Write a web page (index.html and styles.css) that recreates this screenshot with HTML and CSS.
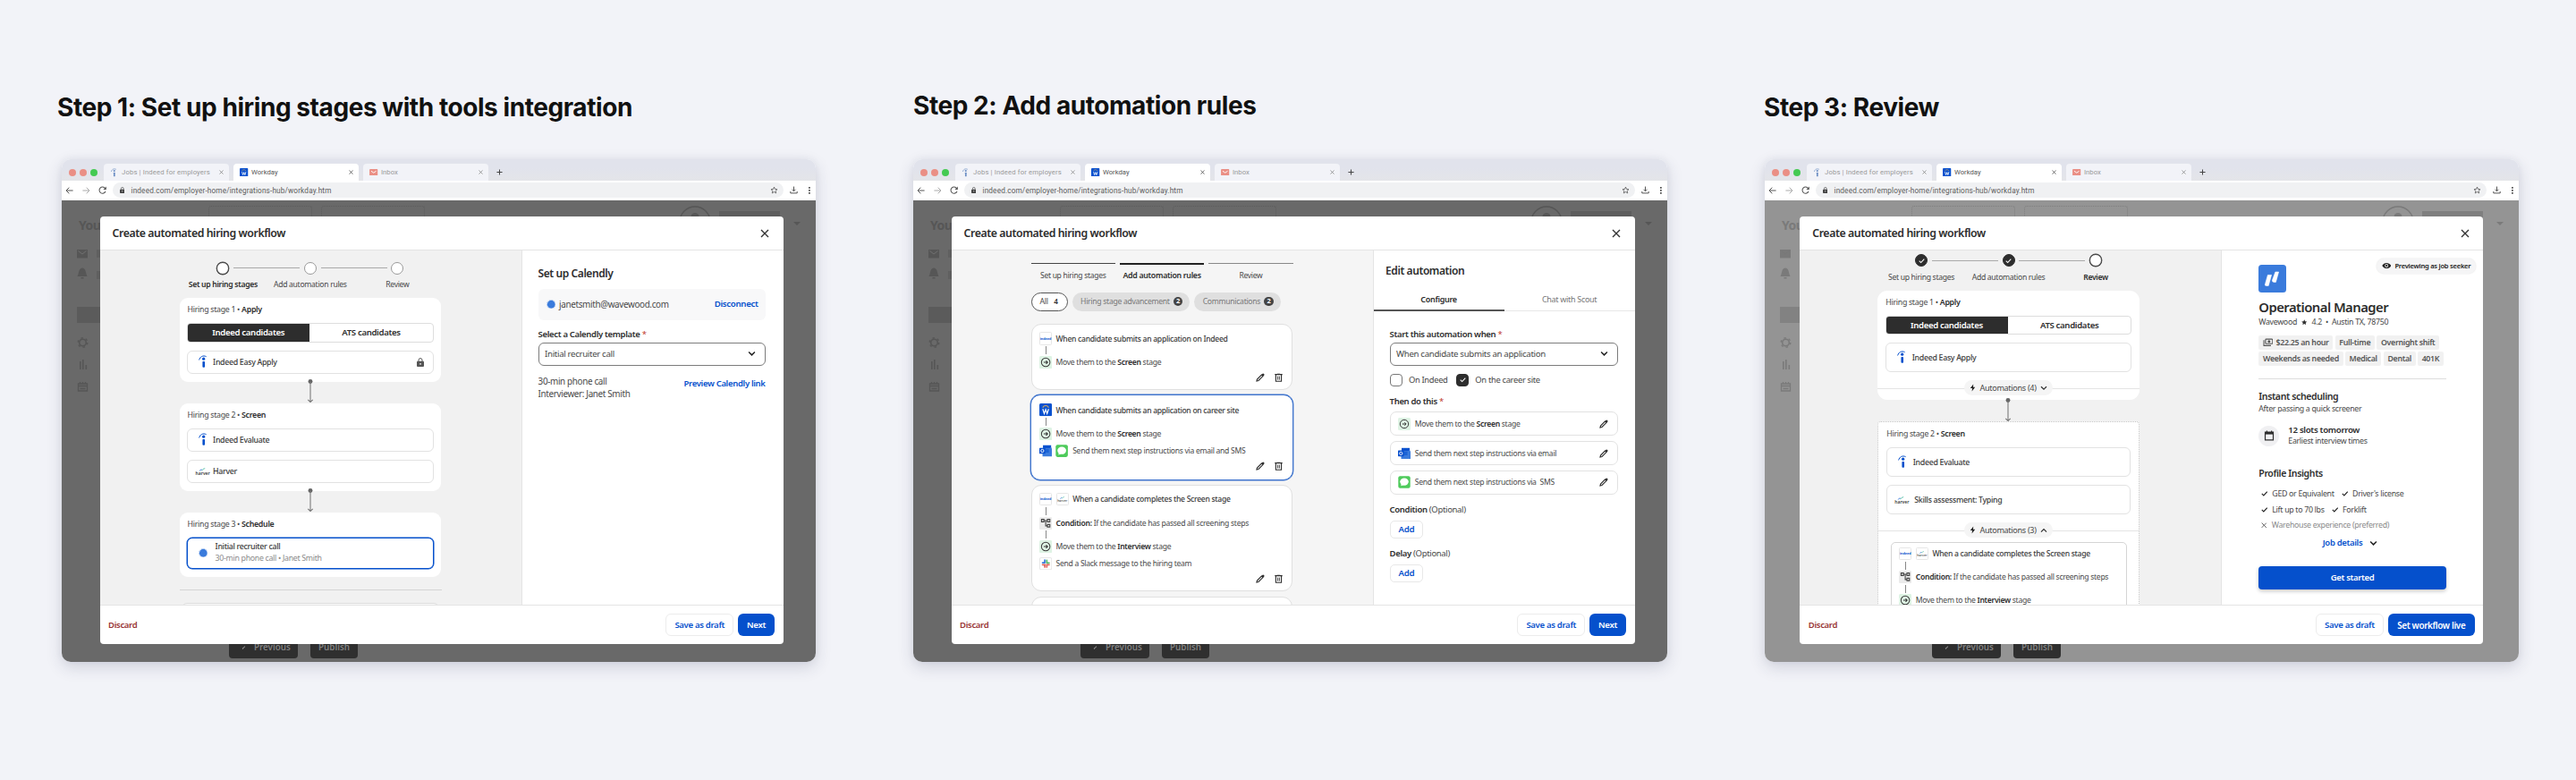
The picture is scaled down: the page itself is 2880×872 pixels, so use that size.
FILE: index.html
```html
<!DOCTYPE html>
<html lang="en">
<head>
  <meta charset="UTF-8" />
  <meta name="viewport" content="width=device-width, initial-scale=1.0"/>
  <title>Automated hiring workflow</title>
  <link rel="stylesheet" href="styles.css">
</head>
<body>
  <!-- Icon sprite -->
  <svg class="sprite" aria-hidden="true">
    <symbol id="i-indeed" viewBox="0 0 10 16">
      <path d="M.8 5.6C1.8 1.8 5.6-.2 9.2 1.6" fill="none" stroke="currentColor" stroke-width="1.1" stroke-linecap="round"/>
      <circle cx="6.3" cy="4.6" r="1.8" fill="currentColor"/>
      <rect x="4.9" y="7.6" width="2.9" height="7.6" rx="1" fill="currentColor"/>
    </symbol>
    <symbol id="i-workday" viewBox="0 0 14 14">
      <rect width="14" height="14" rx="1.5" fill="#0a52cf"/>
      <path d="M3.8 4.8C4.6 1.8 9.4 1.8 10.2 4.8" fill="none" stroke="#c9a36a" stroke-width="1"/>
      <path d="M3.8 6.2l1.6 5L7 6.8l1.6 4.4 1.6-5" fill="none" stroke="#fff" stroke-width="1.2"/>
    </symbol>
    <symbol id="i-mail-red" viewBox="0 0 10 8">
      <rect width="10" height="8" rx="1" fill="#ea8f85"/>
      <path d="M2 2.4l3 2 3-2" fill="none" stroke="#fff" stroke-width="1"/>
    </symbol>
    <symbol id="i-x" viewBox="0 0 10 10"><path d="M1 1l8 8M9 1l-8 8" fill="none" stroke="currentColor" stroke-width="1.4"/></symbol>
    <symbol id="i-plus" viewBox="0 0 8 8"><path d="M4 .5v7M.5 4h7" stroke="currentColor" stroke-width="1.2"/></symbol>
    <symbol id="i-back" viewBox="0 0 9 8"><path d="M8.6 4H1M4.3.7L1 4l3.3 3.3" fill="none" stroke="currentColor" stroke-width="1"/></symbol>
    <symbol id="i-forward" viewBox="0 0 9 8"><path d="M.4 4H8M4.7.7L8 4 4.7 7.3" fill="none" stroke="currentColor" stroke-width="1"/></symbol>
    <symbol id="i-reload" viewBox="0 0 10 10">
      <path d="M8.4 6.3A3.8 3.8 0 1 1 8 2.7" fill="none" stroke="currentColor" stroke-width="1.1"/>
      <path d="M9.3.6v3.6H5.7z" fill="currentColor"/>
    </symbol>
    <symbol id="i-lock" viewBox="0 0 8 10">
      <rect y="3.8" width="8" height="6.2" rx="1" fill="currentColor"/>
      <path d="M2 4V2.6a2 2 0 0 1 4 0V4" fill="none" stroke="currentColor" stroke-width="1"/>
      <circle cx="4" cy="6.9" r=".8" fill="#fff"/>
    </symbol>
    <symbol id="i-star-line" viewBox="0 0 10 10"><path d="M5 1.2l1.1 2.6 2.8.3-2.1 1.9.6 2.8L5 7.3 2.6 8.8l.6-2.8L1.1 4.1l2.8-.3z" fill="none" stroke="currentColor" stroke-width=".9"/></symbol>
    <symbol id="i-star" viewBox="0 0 10 10"><path d="M5 .4l1.4 3 3.3.4-2.4 2.3.6 3.3L5 7.8 2.1 9.4l.6-3.3L.3 3.8l3.3-.4z" fill="currentColor"/></symbol>
    <symbol id="i-download" viewBox="0 0 10 10"><path d="M5 .6v5.6M2.8 4.2L5 6.4l2.2-2.2M.9 6.6v2.2h8.2V6.6" fill="none" stroke="currentColor" stroke-width="1.1"/></symbol>
    <symbol id="i-dots" viewBox="0 0 2 8"><path d="M0 0h1.8v1.8H0zM0 3h1.8v1.8H0zM0 6h1.8v1.8H0z" fill="currentColor"/></symbol>
    <symbol id="i-down" viewBox="0 0 8 6"><path d="M1 1.2l3 3 3-3" fill="none" stroke="currentColor" stroke-width="1.3"/></symbol>
    <symbol id="i-up" viewBox="0 0 8 6"><path d="M1 4.6l3-3 3 3" fill="none" stroke="currentColor" stroke-width="1.3"/></symbol>
    <symbol id="i-move" viewBox="0 0 14 14">
      <rect width="14" height="14" rx="1.5" fill="#def3e4"/>
      <circle cx="7" cy="7" r="4.7" fill="none" stroke="#3a3a3a" stroke-width="1"/>
      <path d="M4.8 7H9M7.4 5.3L9.1 7 7.4 8.7" fill="none" stroke="#333" stroke-width="1"/>
    </symbol>
    <symbol id="i-tree" viewBox="0 0 14 14">
      <rect width="14" height="14" rx="1.5" fill="#ebebeb"/>
      <path d="M2.4 2.6h2.7v2.7H2.4zM8.9 2.6h2.7v2.7H8.9zM8.9 8.3h2.7V11H8.9zM5.1 4h3.8M7 4v5.7h1.9" fill="none" stroke="#444" stroke-width="1.1"/>
    </symbol>
    <symbol id="i-outlook" viewBox="0 0 14 14">
      <path d="M4 .8h9v4H4z" fill="#0a52cf"/>
      <path d="M13 3l1 2v8H3.5V9z" fill="#3a7bdc"/>
      <path d="M4 4.8h6.5V9H4z" fill="#1b63d6"/>
      <rect x="0" y="3.6" width="6.6" height="6.6" rx=".6" fill="#0a52cf"/>
      <circle cx="3.3" cy="6.9" r="1.6" fill="none" stroke="#fff" stroke-width=".9"/>
    </symbol>
    <symbol id="i-message" viewBox="0 0 14 14">
      <rect x=".3" y=".3" width="13.4" height="13.4" rx="2" fill="#4fcb5c"/>
      <ellipse cx="7" cy="6.6" rx="4.8" ry="4.1" fill="#fff"/>
      <path d="M3.8 9l-.6 2.3 3-1z" fill="#fff"/>
    </symbol>
    <symbol id="i-slack" viewBox="0 0 14 14">
      <rect x=".5" y=".5" width="13" height="13" rx="1.5" fill="#fff" stroke="#e8e8e8"/>
      <path d="M6 3v3M3.5 6H5" stroke="#3a7bdc" stroke-width="1.7" stroke-linecap="round"/>
      <path d="M8.2 3.3v2.9M9 6.2h1.8" stroke="#53b96b" stroke-width="1.7" stroke-linecap="round"/>
      <path d="M3.5 8.2h2.9M8.2 8.2h2.6M6 9v1.8M8.2 9.5v1.3" stroke="#e0645c" stroke-width="1.7" stroke-linecap="round"/>
    </symbol>
    <symbol id="i-pencil" viewBox="0 0 10 10">
      <path d="M1 9l.5-2L6.4 2.1l1.5 1.5L3 8.5z" fill="none" stroke="currentColor" stroke-width="1.1"/>
      <path d="M6.1 2.2L7.6.7a.8.8 0 0 1 1.1 0l.6.6a.8.8 0 0 1 0 1.1L7.8 3.9z" fill="currentColor"/>
    </symbol>
    <symbol id="i-trash" viewBox="0 0 9 10">
      <path d="M.3 1.6h8.4M3 1.2h3M1.4 1.8v7.5h6.2V1.8" fill="none" stroke="currentColor" stroke-width="1.1"/>
      <path d="M3.6 3.6v4M5.4 3.6v4" stroke="currentColor" stroke-width=".9"/>
    </symbol>
    <symbol id="i-check" viewBox="0 0 8 8"><path d="M.8 4.2l2.2 2.2 4.2-4.6" fill="none" stroke="currentColor" stroke-width="1.2"/></symbol>
    <symbol id="i-calendly" viewBox="0 0 10 10">
      <circle cx="5" cy="5" r="4.2" fill="#3a7bdc"/>
      <circle cx="5" cy="5" r="4.6" fill="none" stroke="#8fb4ec" stroke-width=".8" stroke-dasharray="1 .7"/>
    </symbol>
    <symbol id="i-bolt" viewBox="0 0 8 10"><path d="M4.8.5L.9 5.7h2.5L3 9.5l4.1-5.3H4.6z" fill="currentColor"/></symbol>
    <symbol id="i-eye" viewBox="0 0 11 8">
      <path d="M.3 4C2.3-.3 8.7-.3 10.7 4 8.7 8.3 2.3 8.3.3 4z" fill="#222"/>
      <circle cx="5.5" cy="4" r="2" fill="#fff"/><circle cx="5.5" cy="4" r="1.2" fill="#222"/>
    </symbol>
    <symbol id="i-money" viewBox="0 0 12 10">
      <path d="M1 2.4v6.4h8.4" fill="none" stroke="currentColor" stroke-width="1.1"/>
      <rect x="3" y="1.2" width="8.3" height="5.4" rx=".8" fill="none" stroke="currentColor" stroke-width="1.2"/>
      <circle cx="7.15" cy="3.9" r="1.6" fill="currentColor"/>
    </symbol>
    <symbol id="i-calendar" viewBox="0 0 12 12"><path d="M1.5 2h9v8.8h-9zM3.4.6v2M8.6.6v2" fill="none" stroke="currentColor" stroke-width="1.2"/><path d="M1 2h10v2.6H1z" fill="currentColor"/></symbol>
    <symbol id="i-arrow" viewBox="0 0 8 27">
      <circle cx="4" cy="2.6" r="2.5" fill="#666"/>
      <path d="M4 3v22M1.2 23.4L4 26l2.8-2.6" fill="none" stroke="#777" stroke-width="1.1"/>
    </symbol>
    <symbol id="i-wavewood" viewBox="0 0 31 31">
      <rect width="31" height="31" rx="3.5" fill="#3a7bdc"/>
      <path d="M10.4 11.4h4.2l-3.4 12H8.5a1.2 1.2 0 0 1-1.1-1.5zM18.9 8h3.7l-3.2 11.4h-2a2 2 0 0 1-1.9-2.5z" fill="#fff" stroke="#fff" stroke-width=".6" stroke-linejoin="round"/>
    </symbol>
    <symbol id="i-harver" viewBox="0 0 14 5">
      <path d="M3.5 4.5Q5 1.5 6.8 2.7" fill="none" stroke="#1b63d6" stroke-width="1"/>
      <path d="M6.5 4Q8 1 11 .8" fill="none" stroke="#43b89a" stroke-width="1"/>
    </symbol>
    <symbol id="i-side" viewBox="0 0 30 180">
      <g fill="currentColor">
        <path d="M0 19h12v9.5H0z"/><path d="M1.5 46.5q1-7 4.5-7t4.5 7l1 2.5H.5zM4.5 50h3v1.5h-3z"/>
        <path d="M22 19h8v9h-8zM22 43h8v9h-8z" opacity=".5"/>
        <path d="M0 83h30v18H0z" opacity=".7"/>
        <path d="M3 144h1.6v9H3zM6 142h1.6v11H6zM9.5 148h1.6v5H9.5z"/>
      </g>
      <path d="M1.5 20.5L6 24l4.5-3.5" fill="none" stroke="#777" stroke-width=".8"/>
      <circle cx="6.5" cy="123" r="3.8" fill="none" stroke="currentColor" stroke-width="1.6"/>
      <circle cx="6.5" cy="123" r="5.3" fill="none" stroke="currentColor" stroke-width="1.4" stroke-dasharray="2.4 3.15"/>
      <path d="M1.5 169h10v8h-10zM1.5 171.5h10M3.5 167v2M6.5 167v2M9.5 167v2M3.5 174.5h6" fill="none" stroke="currentColor" stroke-width="1.3"/>
    </symbol>
    <symbol id="i-user" viewBox="0 0 36 13">
      <circle cx="18" cy="18" r="17" fill="none" stroke="currentColor" stroke-width="1.5"/>
      <circle cx="18" cy="12.5" r="4.5" fill="currentColor"/>
    </symbol>
  </svg>

  <main class="board">

    <!-- Step 1 -->
    <section class="step step-1">
      <h2>Step 1: Set up hiring stages with tools integration</h2>
      <div class="browser">
        <div class="tabbar">
          <span class="lights"><i></i><i></i><i></i></span>
          <div class="tab"><svg class="fav-i"><use href="#i-indeed"/></svg><span>Jobs | Indeed for employers</span><svg class="tab-x"><use href="#i-x"/></svg></div>
          <div class="tab active"><svg class="fav"><use href="#i-workday"/></svg><span>Workday</span><svg class="tab-x"><use href="#i-x"/></svg></div>
          <div class="tab"><svg class="fav-m"><use href="#i-mail-red"/></svg><span>Inbox</span><svg class="tab-x"><use href="#i-x"/></svg></div>
          <svg class="plus"><use href="#i-plus"/></svg>
        </div>
        <div class="toolbar">
          <svg class="nav"><use href="#i-back"/></svg>
          <svg class="nav off"><use href="#i-forward"/></svg>
          <svg class="reload"><use href="#i-reload"/></svg>
          <div class="url"><svg class="url-lock"><use href="#i-lock"/></svg><span>indeed.com/employer-home/integrations-hub/workday.htm</span><svg class="url-star"><use href="#i-star-line"/></svg></div>
          <svg class="dl"><use href="#i-download"/></svg>
          <svg class="dots"><use href="#i-dots"/></svg>
        </div>
        <div class="page">
          <div class="page-top"><i class="ghost"></i><i class="ghost"></i><svg class="user"><use href="#i-user"/></svg><i class="bar"></i><i class="caret"></i></div>
          <div class="page-side"><b>You</b><svg><use href="#i-side"/></svg></div>
          <div class="page-buttons"><span class="prev"><i></i>Previous</span><span>Publish</span></div>

          <div class="modal">
            <header class="modal-head"><h3>Create automated hiring workflow</h3><svg><use href="#i-x"/></svg></header>
            <div class="modal-body">
              <div class="canvas">
                <div class="stepper">
                  <div class="stop current"><i></i><span>Set up hiring stages</span></div>
                  <div class="stop"><i></i><span>Add automation rules</span></div>
                  <div class="stop"><i></i><span>Review</span></div>
                </div>
                <div class="stage">
                  <p class="stage-title">Hiring stage 1 • <b>Apply</b></p>
                  <div class="segment"><span class="on">Indeed candidates</span><span>ATS candidates</span></div>
                  <div class="tool"><svg class="logo-i"><use href="#i-indeed"/></svg>Indeed Easy Apply<svg class="tool-lock"><use href="#i-lock"/></svg></div>
                </div>
                <svg class="arrow"><use href="#i-arrow"/></svg>
                <div class="stage">
                  <p class="stage-title">Hiring stage 2 • <b>Screen</b></p>
                  <div class="tool"><svg class="logo-i"><use href="#i-indeed"/></svg>Indeed Evaluate</div>
                  <div class="tool"><span class="harver"><svg><use href="#i-harver"/></svg>harver</span>Harver</div>
                </div>
                <svg class="arrow"><use href="#i-arrow"/></svg>
                <div class="stage">
                  <p class="stage-title">Hiring stage 3 • <b>Schedule</b></p>
                  <div class="tool selected"><svg class="logo-c"><use href="#i-calendly"/></svg><div>Initial recruiter call<small>30-min phone call • Janet Smith</small></div></div>
                </div>
                <hr class="canvas-rule">
                <div class="stage-next"></div>
              </div>
              <aside class="side calendly">
                <h4>Set up Calendly</h4>
                <div class="account"><svg><use href="#i-calendly"/></svg><span>janetsmith@wavewood.com</span><a>Disconnect</a></div>
                <label class="field">Select a Calendly template <em>*</em></label>
                <div class="select">Initial recruiter call<svg><use href="#i-down"/></svg></div>
                <div class="template"><p>30-min phone call<br>Interviewer: Janet Smith</p><a>Preview Calendly link</a></div>
              </aside>
            </div>
            <footer class="modal-foot"><span class="discard">Discard</span><button class="btn">Save as draft</button><button class="btn primary">Next</button></footer>
          </div>
        </div>
      </div>
    </section>

    <!-- Step 2 -->
    <section class="step step-2">
      <h2>Step 2: Add automation rules</h2>
      <div class="browser">
        <div class="tabbar">
          <span class="lights"><i></i><i></i><i></i></span>
          <div class="tab"><svg class="fav-i"><use href="#i-indeed"/></svg><span>Jobs | Indeed for employers</span><svg class="tab-x"><use href="#i-x"/></svg></div>
          <div class="tab active"><svg class="fav"><use href="#i-workday"/></svg><span>Workday</span><svg class="tab-x"><use href="#i-x"/></svg></div>
          <div class="tab"><svg class="fav-m"><use href="#i-mail-red"/></svg><span>Inbox</span><svg class="tab-x"><use href="#i-x"/></svg></div>
          <svg class="plus"><use href="#i-plus"/></svg>
        </div>
        <div class="toolbar">
          <svg class="nav"><use href="#i-back"/></svg>
          <svg class="nav off"><use href="#i-forward"/></svg>
          <svg class="reload"><use href="#i-reload"/></svg>
          <div class="url"><svg class="url-lock"><use href="#i-lock"/></svg><span>indeed.com/employer-home/integrations-hub/workday.htm</span><svg class="url-star"><use href="#i-star-line"/></svg></div>
          <svg class="dl"><use href="#i-download"/></svg>
          <svg class="dots"><use href="#i-dots"/></svg>
        </div>
        <div class="page">
          <div class="page-top"><i class="ghost"></i><i class="ghost"></i><svg class="user"><use href="#i-user"/></svg><i class="bar"></i><i class="caret"></i></div>
          <div class="page-side"><b>You</b><svg><use href="#i-side"/></svg></div>
          <div class="page-buttons"><span class="prev"><i></i>Previous</span><span>Publish</span></div>

          <div class="modal">
            <header class="modal-head"><h3>Create automated hiring workflow</h3><svg><use href="#i-x"/></svg></header>
            <div class="modal-body">
              <div class="canvas light">
                <div class="progress"><span class="done">Set up hiring stages</span><span class="current">Add automation rules</span><span>Review</span></div>
                <div class="filters">
                  <span class="filter all">All <b>4</b></span>
                  <span class="filter">Hiring stage advancement <i>2</i></span>
                  <span class="filter">Communications <i>2</i></span>
                </div>
                <div class="rule">
                  <div class="rule-row strong"><span class="tile indeed">indeed</span>When candidate submits an application on Indeed</div>
                  <div class="line"></div>
                  <div class="rule-row"><svg><use href="#i-move"/></svg><p>Move them to the <b>Screen</b> stage</p></div>
                  <div class="actions"><svg class="pencil"><use href="#i-pencil"/></svg><svg class="trash"><use href="#i-trash"/></svg></div>
                </div>
                <div class="rule selected">
                  <div class="rule-row strong"><svg><use href="#i-workday"/></svg>When candidate submits an application on career site</div>
                  <div class="line"></div>
                  <div class="rule-row"><svg><use href="#i-move"/></svg><p>Move them to the <b>Screen</b> stage</p></div>
                  <div class="rule-row more"><svg><use href="#i-outlook"/></svg><svg><use href="#i-message"/></svg>Send them next step instructions via email and SMS</div>
                  <div class="actions"><svg class="pencil"><use href="#i-pencil"/></svg><svg class="trash"><use href="#i-trash"/></svg></div>
                </div>
                <div class="rule">
                  <div class="rule-row strong"><span class="tile indeed">indeed</span><span class="tile"><svg><use href="#i-harver"/></svg>harver</span>When a candidate completes the Screen stage</div>
                  <div class="line"></div>
                  <div class="rule-row"><svg><use href="#i-tree"/></svg><p><b>Condition:</b> If the candidate has passed all screening steps</p></div>
                  <div class="line"></div>
                  <div class="rule-row"><svg><use href="#i-move"/></svg><p>Move them to the <b>Interview</b> stage</p></div>
                  <div class="rule-row more"><svg><use href="#i-slack"/></svg>Send a Slack message to the hiring team</div>
                  <div class="actions"><svg class="pencil"><use href="#i-pencil"/></svg><svg class="trash"><use href="#i-trash"/></svg></div>
                </div>
                <div class="rule next"></div>
              </div>
              <aside class="side editor">
                <h4>Edit automation</h4>
                <nav class="tabs"><span class="on">Configure</span><span>Chat with Scout</span></nav>
                <div class="form">
                  <label class="field">Start this automation when <em>*</em></label>
                  <div class="select">When candidate submits an application<svg><use href="#i-down"/></svg></div>
                  <div class="checks"><i></i><span>On Indeed</span><i class="on"><svg><use href="#i-check"/></svg></i><span>On the career site</span></div>
                  <label class="field">Then do this <em>*</em></label>
                  <div class="action"><svg><use href="#i-move"/></svg><p>Move them to the <b>Screen</b> stage</p><svg class="pencil"><use href="#i-pencil"/></svg></div>
                  <div class="action"><svg><use href="#i-outlook"/></svg><p>Send them next step instructions via email</p><svg class="pencil"><use href="#i-pencil"/></svg></div>
                  <div class="action"><svg><use href="#i-message"/></svg><p>Send them next step instructions via&nbsp; SMS</p><svg class="pencil"><use href="#i-pencil"/></svg></div>
                  <label class="field optional">Condition <span>(Optional)</span></label>
                  <button class="add">Add</button>
                  <label class="field optional">Delay <span>(Optional)</span></label>
                  <button class="add">Add</button>
                </div>
              </aside>
            </div>
            <footer class="modal-foot"><span class="discard">Discard</span><button class="btn">Save as draft</button><button class="btn primary">Next</button></footer>
          </div>
        </div>
      </div>
    </section>

    <!-- Step 3 -->
    <section class="step step-3">
      <h2>Step 3: Review</h2>
      <div class="browser">
        <div class="tabbar">
          <span class="lights"><i></i><i></i><i></i></span>
          <div class="tab"><svg class="fav-i"><use href="#i-indeed"/></svg><span>Jobs | Indeed for employers</span><svg class="tab-x"><use href="#i-x"/></svg></div>
          <div class="tab active"><svg class="fav"><use href="#i-workday"/></svg><span>Workday</span><svg class="tab-x"><use href="#i-x"/></svg></div>
          <div class="tab"><svg class="fav-m"><use href="#i-mail-red"/></svg><span>Inbox</span><svg class="tab-x"><use href="#i-x"/></svg></div>
          <svg class="plus"><use href="#i-plus"/></svg>
        </div>
        <div class="toolbar">
          <svg class="nav"><use href="#i-back"/></svg>
          <svg class="nav off"><use href="#i-forward"/></svg>
          <svg class="reload"><use href="#i-reload"/></svg>
          <div class="url"><svg class="url-lock"><use href="#i-lock"/></svg><span>indeed.com/employer-home/integrations-hub/workday.htm</span><svg class="url-star"><use href="#i-star-line"/></svg></div>
          <svg class="dl"><use href="#i-download"/></svg>
          <svg class="dots"><use href="#i-dots"/></svg>
        </div>
        <div class="page">
          <div class="page-top"><i class="ghost"></i><i class="ghost"></i><svg class="user"><use href="#i-user"/></svg><i class="bar"></i><i class="caret"></i></div>
          <div class="page-side"><b>You</b><svg><use href="#i-side"/></svg></div>
          <div class="page-buttons"><span class="prev"><i></i>Previous</span><span>Publish</span></div>

          <div class="modal">
            <header class="modal-head"><h3>Create automated hiring workflow</h3><svg><use href="#i-x"/></svg></header>
            <div class="modal-body">
              <div class="canvas">
                <div class="stepper">
                  <div class="stop done"><i><svg><use href="#i-check"/></svg></i><span>Set up hiring stages</span></div>
                  <div class="stop done"><i><svg><use href="#i-check"/></svg></i><span>Add automation rules</span></div>
                  <div class="stop current"><i></i><span>Review</span></div>
                </div>
                <div class="stage">
                  <p class="stage-title">Hiring stage 1 • <b>Apply</b></p>
                  <div class="segment"><span class="on">Indeed candidates</span><span>ATS candidates</span></div>
                  <div class="tool"><svg class="logo-i"><use href="#i-indeed"/></svg>Indeed Easy Apply</div>
                  <div class="automations"><span><svg class="bolt"><use href="#i-bolt"/></svg>Automations (4)<svg class="chev"><use href="#i-down"/></svg></span></div>
                </div>
                <svg class="arrow"><use href="#i-arrow"/></svg>
                <div class="stage open">
                  <p class="stage-title">Hiring stage 2 • <b>Screen</b></p>
                  <div class="tool"><svg class="logo-i"><use href="#i-indeed"/></svg>Indeed Evaluate</div>
                  <div class="tool"><span class="harver wide"><svg><use href="#i-harver"/></svg>harver</span>Skills assessment: Typing</div>
                  <div class="automations"><span><svg class="bolt"><use href="#i-bolt"/></svg>Automations (3)<svg class="chev"><use href="#i-up"/></svg></span></div>
                  <div class="rule inner">
                    <div class="rule-row strong"><span class="tile indeed">indeed</span><span class="tile"><svg><use href="#i-harver"/></svg>harver</span>When a candidate completes the Screen stage</div>
                    <div class="line"></div>
                    <div class="rule-row"><svg><use href="#i-tree"/></svg><p><b>Condition:</b> If the candidate has passed all screening steps</p></div>
                    <div class="line"></div>
                    <div class="rule-row"><svg><use href="#i-move"/></svg><p>Move them to the <b>Interview</b> stage</p></div>
                  </div>
                </div>
              </div>
              <aside class="side job">
                <div class="job-top"><svg class="brand"><use href="#i-wavewood"/></svg><span class="preview"><svg><use href="#i-eye"/></svg>Previewing as job seeker</span></div>
                <h1>Operational Manager</h1>
                <p class="job-meta">Wavewood <svg><use href="#i-star"/></svg> 4.2 &nbsp;•&nbsp; Austin TX, 78750</p>
                <div class="tags"><span><svg><use href="#i-money"/></svg>$22.25 an hour</span><span>Full-time</span><span>Overnight shift</span></div>
                <div class="tags"><span>Weekends as needed</span><span>Medical</span><span>Dental</span><span>401K</span></div>
                <hr>
                <h5>Instant scheduling</h5>
                <p class="note">After passing a quick screener</p>
                <div class="slots"><i><svg><use href="#i-calendar"/></svg></i><div><b>12 slots tomorrow</b><span>Earliest interview times</span></div></div>
                <h5>Profile Insights</h5>
                <div class="insight first"><svg><use href="#i-check"/></svg><span>GED or Equivalent</span><svg><use href="#i-check"/></svg><span>Driver's license</span></div>
                <div class="insight"><svg><use href="#i-check"/></svg><span>Lift up to 70 lbs</span><svg><use href="#i-check"/></svg><span>Forklift</span></div>
                <div class="insight missing"><svg><use href="#i-x"/></svg><span>Warehouse experience (preferred)</span></div>
                <div class="details"><a>Job details</a><svg><use href="#i-down"/></svg></div>
                <button class="start">Get started</button>
              </aside>
            </div>
            <footer class="modal-foot"><span class="discard">Discard</span><button class="btn">Save as draft</button><button class="btn primary">Set workflow live</button></footer>
          </div>
        </div>
      </div>
    </section>

  </main>
</body>
</html>
```
FILE: styles.css
```css
:root {
  --blue: #0550cc;
  --ink: #2d2d2d;
  --text: #484848;
  --muted: #8a8a8a;
  --line: #e4e4e4;
  --bg: #f2f3f8;
}

* {
  margin: 0;
  padding: 0;
  box-sizing: border-box;
  letter-spacing: -0.035em;
}

body {
  width: 2880px;
  height: 872px;
  overflow: hidden;
  background: var(--bg);
  color: var(--text);
  font-family: 'Noto Sans', 'Open Sans', sans-serif;
  font-size: 8.5px;
  line-height: 12px;
}

svg { display: block; flex: none; }
.sprite { position: absolute; width: 0; height: 0; }
b { font-weight: 600; color: var(--ink); }
a { color: var(--blue); font-weight: 600; }
button { font: inherit; border: none; background: none; }

.board { display: flex; gap: 109px; padding: 103px 0 0 69px; }
.step { width: 843px; flex: none; }
.step h2 {
  font-family: Inter, sans-serif;
  font-size: 28px;
  font-weight: 700;
  line-height: 34px;
  letter-spacing: -0.0155em;
  color: #111;
  white-space: nowrap;
  margin: 0 0 41px -5px;
}
.step-2 h2 { margin: -2px 0 43px 0; }
.step-3 h2 { margin-left: -1px; }

/* Browser window */
.browser {
  height: 562px;
  border-radius: 10px;
  overflow: hidden;
  background: #fff;
  box-shadow: 0 6px 18px rgba(40,45,80,0.16), 0 0 8px rgba(40,45,80,0.05);
}
.tabbar {
  display: flex;
  height: 24px;
  padding: 5px 0 0 7.5px;
  background: linear-gradient(#e1e3ec 40%, #e4e5e9);
}
.lights { display: flex; gap: 4px; width: 39.5px; padding-top: 5.5px; }
.lights i { width: 8px; height: 8px; border-radius: 50%; background: #ea8f85; }
.lights i:last-child { background: #45ca52; }
.tab {
  display: flex;
  align-items: center;
  width: 140px;
  margin-right: 5px;
  padding: 0 6px 0 8px;
  border-radius: 4px 4px 0 0;
  background: #f2f3f8;
  color: #999;
  font-family: Roboto, sans-serif;
  font-size: 7.7px;
}
.tab.active { background: #fff; color: #555; padding-left: 7px; }
.tab span { flex: 1; letter-spacing: 0.02em; }
.tab.active span, .tab:nth-child(4) span { letter-spacing: 0; }
.tab:nth-child(4) { padding-left: 7px; }
.fav-i { width: 6px; height: 10px; margin-right: 6px; color: #6d8fc4; }
.fav { width: 9.5px; height: 9.5px; margin-right: 3.5px; }
.fav-m { width: 9.5px; height: 7.5px; margin-right: 3.5px; }
.tab-x { width: 5px; height: 5px; color: #777; }
.tab.active .tab-x { color: #333; }
.plus { width: 7px; height: 7px; margin: 6px 0 0 4px; color: #444; }
.toolbar { display: flex; align-items: center; height: 21.5px; padding-left: 4px; color: #555; }
.nav { width: 9px; height: 8px; margin-right: 9.5px; }
.nav.off { color: #aaa; }
.reload { width: 9.5px; height: 9.5px; margin-right: 6.5px; }
.url {
  display: flex;
  align-items: center;
  width: 750px;
  height: 17px;
  padding: 0 6px 0 7.5px;
  border-radius: 9px;
  background: #f0f1f3;
}
.url span { flex: 1; font-family: Roboto, sans-serif; font-size: 8.2px; letter-spacing: 0.02em; color: #5a5a5a; }
.url-lock { width: 5.5px; height: 7px; margin-right: 7.5px; color: #444; }
.url-star { width: 9px; height: 9px; }
.dl { width: 9px; height: 9px; margin-left: 7px; }
.dots { width: 2px; height: 8px; margin-left: 12px; }

/* Page under the overlay */
.page { position: relative; height: 516.5px; background: #696969; color: #565656; }
.page-top { display: flex; height: 19px; padding: 6px 0 0 164px; }
.ghost { width: 116px; height: 20px; margin-right: 9.5px; border: 1px dotted #5c5c5c; border-bottom: none; border-radius: 3px; }
.user { width: 36px; height: 13px; margin-left: 275px; }
.bar { width: 68px; height: 7px; margin: 6px 0 0 9px; background: #5d5d5d; }
.caret { margin: 18px 0 0 14.5px; border: 4px solid transparent; border-top-color: currentColor; height: 0; }
.page-side { width: 60px; padding-left: 19px; height: 467px; }
.page-side b { display: block; height: 17px; color: inherit; font-size: 14px; font-weight: 700; line-height: 17px; }
.page-side svg { width: 30px; height: 180px; margin-left: -2px; }
.page-buttons { display: flex; gap: 14.5px; padding-left: 187px; }
.page-buttons span {
  display: flex;
  align-items: center;
  height: 26px;
  padding: 3px 9px 0;
  border-radius: 4px;
  background: #2f2f2f;
  color: #808080;
  font-size: 9.8px;
  font-weight: 600;
  letter-spacing: 0;
}
.page-buttons .prev { width: 76.5px; }
.page-buttons .prev i { width: 4px; height: 4px; margin: 0 11px 0 7px; border: solid #8a8a8a; border-width: 0 0 1px 1px; transform: rotate(45deg); }
.step-3 .page { background: #949494; color: #7a7a7a; }
.step-3 .bar { background: #7f7f7f; }
.step-3 .ghost { border-color: #7f7f7f; }

/* Modal */
.modal {
  position: absolute;
  top: 18.5px;
  left: 42.6px;
  display: flex;
  flex-direction: column;
  width: 764px;
  height: 478px;
  border-radius: 4px;
  overflow: hidden;
  background: #fff;
  color: var(--text);
}
.step-3 .modal { left: 39.3px; }
.modal-head {
  display: flex;
  align-items: center;
  justify-content: space-between;
  height: 38px;
  padding: 0 15.5px 0 14px;
  border-bottom: 1px solid var(--line);
}
.modal-head h3 { font-size: 12.3px; font-weight: 600; color: var(--ink); }
.modal-head svg { width: 10px; height: 10px; color: #333; }
.modal-body { display: flex; height: 396px; }
.canvas { width: 472px; padding-left: 89px; background: #f1f1f1; border-right: 1px solid var(--line); overflow: hidden; }
.canvas.light { background: #f5f5f5; }
.side { flex: 1; background: #fff; }
.side h4 { font-size: 12px; font-weight: 600; line-height: 16px; color: var(--ink); }
.modal-foot {
  display: flex;
  align-items: center;
  height: 44px;
  padding: 0 9.8px 0 9.5px;
  border-top: 1px solid var(--line);
}
.discard { flex: 1; color: #983434; font-size: 9.5px; font-weight: 600; }
.btn {
  height: 25.5px;
  padding: 0 8.5px;
  border: 1px solid #ececec;
  border-radius: 6px;
  color: var(--blue);
  font-size: 9.6px;
  font-weight: 600;
  min-width: 76px;
}
.btn.primary { min-width: 40.5px; margin-left: 5px; border: none; background: var(--blue); color: #fff; }
.step-3 .btn.primary { min-width: 96.5px; font-size: 9.9px; }

/* Stepper with circles */
.stepper { display: flex; width: 292.5px; padding-top: 12.5px; }
.stop { position: relative; width: 97.5px; text-align: center; white-space: nowrap; font-size: 8.6px; }
.stop i {
  display: flex;
  align-items: center;
  justify-content: center;
  width: 14px;
  height: 14px;
  margin: 0 auto 5.5px;
  border: 1px solid #999;
  border-radius: 50%;
  background: #fff;
}
.stop span { display: block; }
.stop.current i { border-color: #444; box-shadow: 0 0 0 .4px #444; }
.stop.current span { font-weight: 600; color: var(--ink); }
.stop.done i { background: var(--ink); border-color: var(--ink); color: #fff; }
.stop.done svg { width: 7px; height: 7px; }
.stop + .stop::before {
  content: '';
  position: absolute;
  top: 6.5px;
  left: -37px;
  width: 74px;
  height: 1px;
  background: #aaa;
}
.step-3 .stepper { padding-top: 4px; }

/* Stage cards */
.stage { width: 292.5px; padding: 7px 8.5px 9px; border-radius: 9px; background: #fff; }
.stepper + .stage { margin-top: 9px; }
.stage-title { font-size: 8.8px; padding-left: .5px; }
.segment {
  display: flex;
  height: 21.5px;
  margin: 9px 0;
  border: 1px solid #ddd;
  border-radius: 4px;
  overflow: hidden;
}
.segment span { flex: 1; text-align: center; font-size: 9.6px; font-weight: 600; line-height: 19.5px; color: var(--ink); }
.segment .on { background: var(--ink); color: #fff; margin: -1px 0 -1px -1px; line-height: 21.5px; }
.tool {
  display: flex;
  align-items: center;
  height: 26px;
  margin-top: 9px;
  padding: 0 10px 0 11.5px;
  border: 1px solid #e2e2e2;
  border-radius: 6px;
  background: #fff;
  font-size: 8.8px;
  font-weight: 500;
  color: #3a3a3a;
}
.tool.selected { height: 35px; border-color: var(--blue); box-shadow: 0 0 0 .5px var(--blue); line-height: 13.5px; }
.tool small { display: block; color: var(--muted); font-size: 8.8px; font-weight: 400; }
.logo-i { width: 9px; height: 14.5px; margin-right: 7.5px; color: var(--blue); }
.logo-c { width: 10.5px; height: 10.5px; margin-right: 8.5px; }
.tool-lock { width: 8px; height: 10px; margin-left: auto; color: #555; }
.harver { width: 15px; margin: 0 4.5px 0 -3px; font-size: 5px; font-weight: 600; line-height: 4px; text-align: center; letter-spacing: 0; }
.harver svg { width: 14px; height: 4px; }
.arrow { width: 8px; height: 26.5px; margin: -2.5px 0 0 142px; }
.canvas-rule { width: 293px; height: 1px; margin: 14px 0 0; border: none; background: #d5d5d5; }
.stage-next { width: 288px; height: 30px; margin: 14px 0 0 2px; border: 1px solid #ddd; border-radius: 6px; background: #fafafa; }

.step-3 .canvas { padding-left: 87px; width: 471.5px; }
.step-3 .stage { padding-bottom: 0; border-radius: 11px; }
.step-3 .tool { height: 33px; padding-left: 12.5px; }
.step-3 .stage.open { padding: 7.5px 8.5px 0; border: 1px dotted #c4c4c4; border-radius: 4px; margin-top: -.5px; }
.harver.wide { margin: 0 7px 0 -4px; }
.automations {
  display: flex;
  justify-content: center;
  height: 31px;
  margin: 0 -8.5px;
  padding: 9px 0 5px;
  background: linear-gradient(var(--line), var(--line)) 0 17.5px / 100% 1px no-repeat;
}
.automations span {
  display: flex;
  align-items: center;
  height: 17px;
  padding: 0 6px;
  border-radius: 9px;
  background: #f5f5f5;
  font-size: 9.1px;
}
.bolt { width: 7px; height: 9px; margin-right: 4px; color: #222; }
.chev { width: 8px; height: 6px; margin-left: 4px; color: #333; }

/* Automation rules */
.progress { display: flex; gap: 5px; width: 293px; padding: 14px 0 0; }
.progress span { flex: 1; border-top: 1px solid #888; padding-top: 6.5px; text-align: center; font-size: 8.5px; white-space: nowrap; }
.progress .done { border-color: #444; }
.progress .current { border-top: 2px solid #222; padding-top: 5.5px; font-weight: 600; color: var(--ink); font-size: 8.8px; }
.filters { display: flex; gap: 5px; margin: 13px 0 14.5px; }
.filter {
  display: flex;
  align-items: center;
  height: 21px;
  padding: 0 8px 0 9.5px;
  border-radius: 11px;
  background: #dfdfdf;
  color: #777;
  font-size: 8.65px;
  white-space: nowrap;
}
.filter.all { width: 41px; padding: 0 10px 0 9px; border: 1px solid #555; background: #fff; color: var(--text); justify-content: space-between; }
.filter b { font-size: 8px; }
.filter i {
  width: 10.5px;
  height: 9.5px;
  margin-left: 4px;
  border-radius: 5px;
  background: #444;
  color: #fff;
  font-size: 7.5px;
  font-style: normal;
  font-weight: 700;
  line-height: 9.5px;
  text-align: center;
}
.rule {
  width: 292.5px;
  margin-bottom: 4.5px;
  padding: 8.3px 8.3px 7px;
  border: 1px solid #e0e0e0;
  border-radius: 11px;
  background: #fff;
}
.rule.selected { width: 294px; margin: 0 -.8px 4.8px; padding: 9.6px 9px 8.8px; border-color: #3f74cd; box-shadow: 0 0 0 .4px #3f74cd; }
.rule.next { margin-top: 6px; height: 30px; }
.rule-row { display: flex; align-items: center; gap: 4.5px; height: 14.5px; white-space: nowrap; font-size: 8.6px; }
.rule-row.strong { font-weight: 500; color: #3a3a3a; font-size: 8.6px; }
.rule-row.more { margin-top: 4.4px; }
.rule-row > svg { width: 14.2px; height: 14.2px; }
.tile {
  display: flex;
  flex-direction: column;
  align-items: center;
  justify-content: center;
  width: 14.2px;
  height: 14.2px;
  border: 1px solid #e6e6e6;
  border-radius: 1.5px;
  background: #fff;
  color: #444;
  font-size: 3.5px;
  line-height: 4px;
  letter-spacing: 0;
}
.tile svg { width: 9px; height: 3px; }
.tile.indeed { color: var(--blue); font-weight: 700; font-size: 3.7px; }
.line { width: 1px; height: 8.9px; margin: 1.5px 0 1.5px 7px; background: #888; }
.actions { display: flex; justify-content: flex-end; align-items: center; gap: 11.5px; height: 12px; margin-top: 4px; padding-right: 1.5px; color: #2d2d2d; }
.pencil { width: 10px; height: 10px; color: #2d2d2d; }
.trash { width: 9px; height: 10px; }
.rule.inner { width: 264px; height: 120px; margin: 0 0 0 5px; padding: 5px 8.3px; border-radius: 5px; border-color: #d5d5d5; }
.rule.inner .rule-row { line-height: 10px; }
.rule.inner .line { height: 8.5px; }

/* Side panels */
.side { font-size: 9.5px; }
.calendly { padding: 17.5px 20px 0 18px; }
.account { display: flex; align-items: center; height: 35px; margin-top: 9px; padding: 0 8px 0 9px; border-radius: 6px; background: #f8f8f9; }
.account svg { width: 10.5px; height: 10.5px; margin-right: 4px; }
.account span { flex: 1; font-size: 9.9px; }
.account a { font-size: 9.7px; }
.field { display: block; font-size: 9.5px; font-weight: 600; color: var(--ink); }
.field em { color: #c0392b; font-style: normal; font-weight: 400; }
.field span { font-weight: 400; color: var(--text); }
.calendly .field { margin: 10px 0 3.5px; }
.select {
  display: flex;
  align-items: center;
  justify-content: space-between;
  height: 25.5px;
  padding: 0 9.5px 0 6.5px;
  border: 1px solid #7c7c7c;
  border-radius: 6px;
  font-size: 9.7px;
}
.select svg { width: 9px; height: 7px; color: #222; }
.template { display: flex; justify-content: space-between; margin-top: 10px; line-height: 14px; }
.template a { margin-top: 3px; }
.template p { font-size: 9.9px; }

.editor h4 { padding: 15px 0 0 13.5px; }
.tabs { display: flex; height: 30px; margin: 7px 0 19.5px; padding-top: 11px; border-bottom: 1px solid #e8e8e8; }
.tabs span { flex: 1; text-align: center; font-size: 9px; height: 19px; color: #777; }
.tabs .on { color: var(--ink); font-weight: 600; border-bottom: 2px solid #555; }
.form { padding: 0 19px 0 18px; }
.form .select { margin: 3.5px 0 9px; }
.checks { display: flex; align-items: center; height: 14.5px; margin-bottom: 10.5px; }
.checks i { display: flex; align-items: center; justify-content: center; width: 14.3px; height: 14.3px; border: 1px solid #777; border-radius: 4px; margin-right: 7px; background: #fff; }
.checks i.on { background: var(--ink); border-color: var(--ink); color: #fff; }
.checks svg { width: 7px; height: 7px; }
.checks span { margin-right: 9.5px; font-size: 9.4px; }
.action {
  display: flex;
  align-items: center;
  height: 27.5px;
  margin-top: 5.4px;
  padding: 0 10px 0 8.5px;
  border: 1px solid #e2e2e2;
  border-radius: 7px;
  font-size: 8.6px;
}
.action > svg:first-child { width: 14px; height: 14px; margin-right: 4.7px; }
.action p { flex: 1; }
.optional { margin-top: 11.2px; }
.add { display: block; width: 37.5px; height: 20.3px; margin-top: 5.6px; border: 1px solid #e8e8e8; border-radius: 5px; color: var(--blue); font-size: 9.7px; font-weight: 600; }

/* Job preview */
.job { padding: 8.5px 8.5px 0 41.5px; }
.job-top { display: flex; justify-content: space-between; }
.brand { width: 31px; height: 31px; margin-top: 7px; }
.preview {
  display: flex;
  align-items: center;
  height: 17.5px;
  padding: 0 5.5px;
  border-radius: 9px;
  background: #f5f5f6;
  box-shadow: 0 0 2px rgba(0,0,0,0.12);
  color: #222;
  font-size: 7.6px;
  font-weight: 600;
}
.preview svg { width: 10.5px; height: 8px; margin-right: 4px; }
.job h1 { margin-top: 6px; font-size: 14.8px; font-weight: 600; line-height: 20px; color: var(--ink); }
.job-meta { display: flex; align-items: center; margin-top: 1.5px; font-size: 8.8px; white-space: pre; }
.job-meta svg { width: 6.5px; height: 6.5px; margin: 0 3px; color: #333; }
.tags { display: flex; gap: 2.3px; margin-top: 2px; }
.job-meta + .tags { margin-top: 9px; }
.tags span { display: flex; align-items: center; height: 16px; padding: 0 4.7px; border-radius: 2px; background: #f1f1f1; color: #555; font-size: 8.8px; font-weight: 600; }
.tags svg { width: 11.5px; height: 9.5px; margin-right: 3px; }
.job hr { width: 209.5px; height: 1px; margin: 14px 0 12px; border: none; background: #ddd; }
.job h5 { font-size: 10.5px; font-weight: 600; line-height: 14px; color: var(--ink); }
.note { margin-top: .5px; font-size: 8.8px; }
.slots { display: flex; align-items: center; margin: 11.5px 0 22px; }
.slots i { display: flex; align-items: center; justify-content: center; width: 23px; height: 23px; margin-right: 10px; border-radius: 50%; background: #f0f0f2; color: #2d2d2d; }
.slots svg { width: 12px; height: 12px; }
.slots b, .slots span { display: block; line-height: 13px; }
.slots b { font-size: 9.7px; }
.slots span { font-size: 8.8px; }
.insight { display: flex; align-items: center; height: 12px; margin-top: 5.5px; padding-left: 2.5px; font-size: 8.8px; }
.insight.first { margin-top: 10px; }
.insight svg { width: 7.5px; height: 7.5px; margin-right: 5px; color: #222; }
.insight span { margin-right: 8px; }
.insight.missing { color: #8a8a8a; }
.insight.missing svg { width: 6.5px; height: 6.5px; margin: 0 5px 0 .5px; color: #555; }
.details { display: flex; justify-content: center; align-items: center; width: 209.5px; margin: 8px 0 19.5px; padding-right: 5px; }
.details svg { width: 9px; height: 7px; margin-left: 8px; color: #222; }
.start {
  width: 209.5px;
  height: 26.5px;
  border-radius: 4px;
  background: var(--blue);
  box-shadow: 0 2px 4px rgba(0,0,0,0.22);
  color: #fff;
  font-size: 9.5px;
  font-weight: 600;
}
```
